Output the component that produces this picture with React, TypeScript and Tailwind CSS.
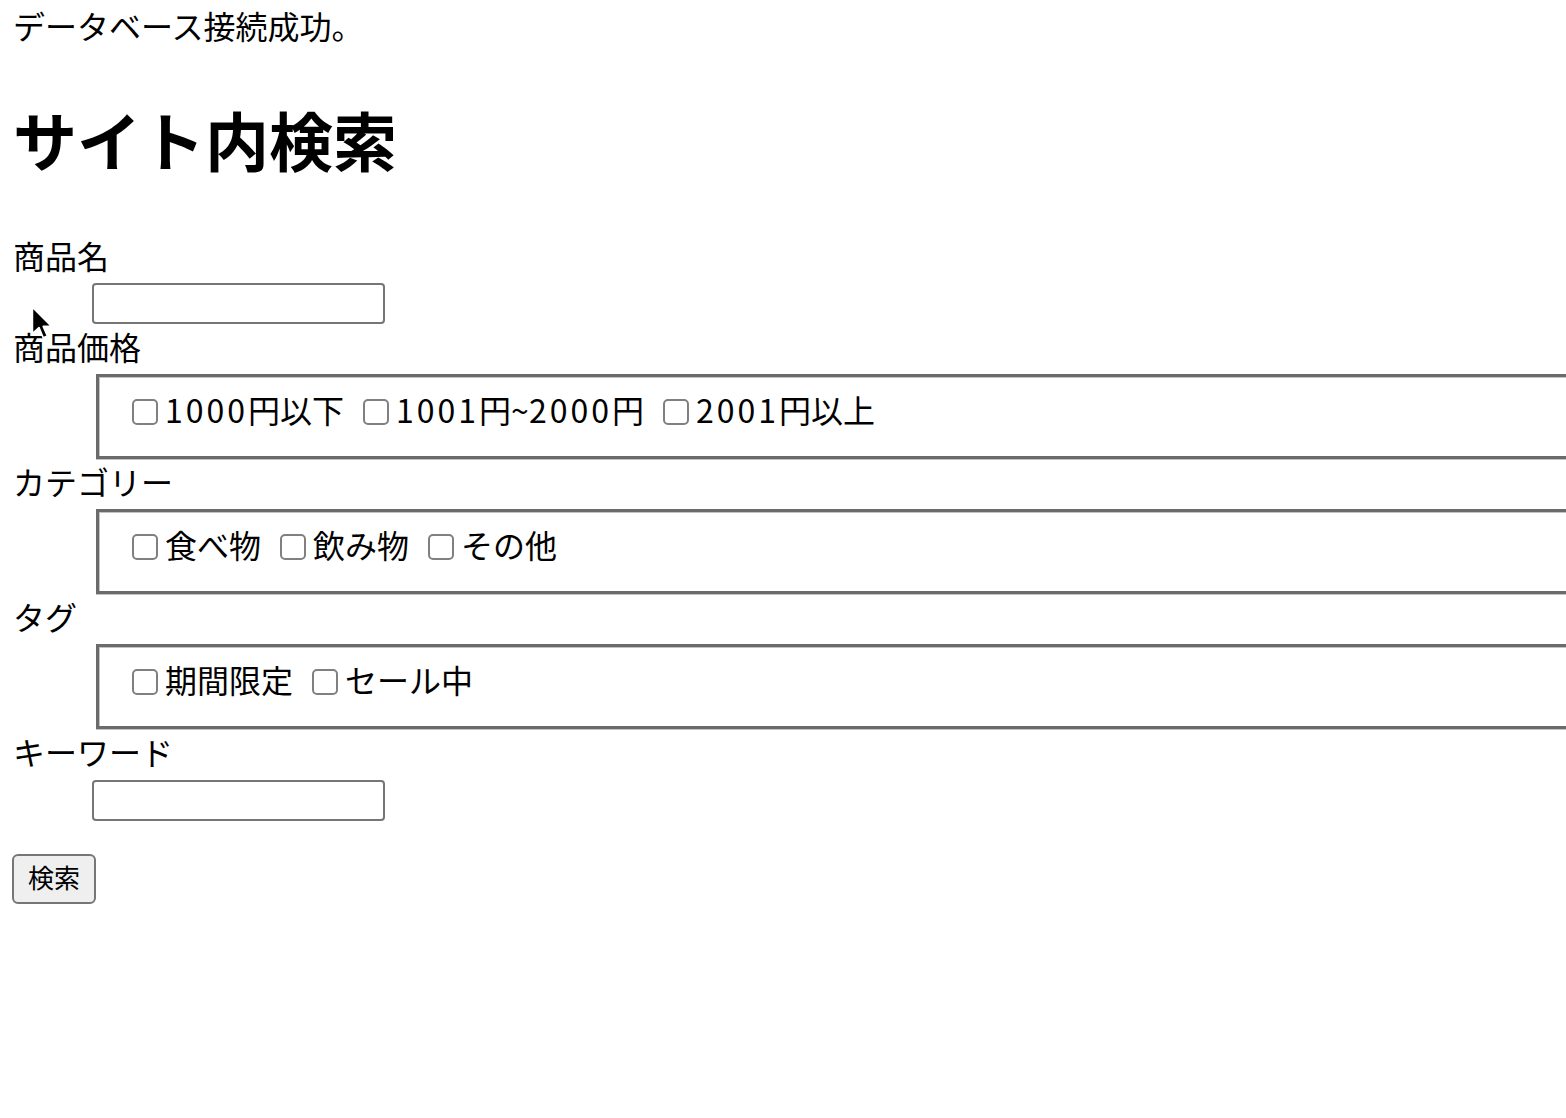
import React from 'react';

const font = { fontFamily: '"Noto Sans CJK JP", "Noto Sans", sans-serif' };

const groups: { label: string; items: string[] }[] = [
  { label: '商品価格', items: ['1000円以下', '1001円~2000円', '2001円以上'] },
  { label: 'カテゴリー', items: ['食べ物', '飲み物', 'その他'] },
  { label: 'タグ', items: ['期間限定', 'セール中'] },
];

// digits in the reference font run a little wider, so space them out
const withWideDigits = (text: string) =>
  text.split(/(\d+)/).map((part, i) =>
    /^\d+$/.test(part) ? (
      <span key={i} className="tracking-[3px]">
        {part}
      </span>
    ) : (
      <React.Fragment key={i}>{part}</React.Fragment>
    )
  );

const Label = ({ children }: { children: React.ReactNode }) => (
  <div className="h-[50px] pb-[6px] leading-[44px] pl-[1px] text-[32px] text-black">{children}</div>
);

const TextField = () => (
  <div className="ml-[80px] h-[41px]">
    <input
      type="text"
      className="box-border w-[293px] h-[41px] border-2 border-[#767676] rounded-[4px] bg-white outline-none"
    />
  </div>
);

const CheckGroup = ({ items }: { items: string[] }) => (
  <div className="ml-[84px] box-border w-[1600px] h-[85px] border-[3px] border-[#6b6b6b] shadow-[inset_1px_1px_0_#c2c2c2,0_1px_0_#c2c2c2] pl-[24px] pt-[8px]">
    <div className="flex items-center h-[48px] text-[32px] leading-[48px]">
      {items.map((item, i) => (
        <label key={item} className={`flex items-center ${i === 0 ? 'ml-[9px]' : 'ml-[19px]'}`}>
          <input
            type="checkbox"
            className="appearance-none box-border w-[26px] h-[26px] border-2 border-[#808080] rounded-[5px] bg-white m-0 mt-[6px]"
          />
          <span className="ml-[7px] text-black">{withWideDigits(item)}</span>
        </label>
      ))}
    </div>
  </div>
);

const Cursor = () => (
  <svg
    className="absolute left-[30px] top-[306px]"
    width="24"
    height="36"
    viewBox="0 0 20 30"
  >
    <path
      d="M2 1 L2 23 L7.5 18 L11 26.5 L14.5 25 L11 17 L18 17 Z"
      fill="#000"
      stroke="#fff"
      strokeWidth="1.4"
      strokeLinejoin="round"
    />
  </svg>
);

export default function App() {
  return (
    <div className="relative w-full min-h-screen overflow-hidden bg-white text-black" style={font}>
      <div className="pl-[12px]">
        <div className="h-[53px] leading-[50px] text-[32px] pl-[1px]">データベース接続成功。</div>

        <h1 className="h-[180px] pb-[10px] flex items-center text-[64px] font-bold leading-none pl-[1px]">
          サイト内検索
        </h1>

        <Label>商品名</Label>
        <TextField />

        {groups.map((g) => (
          <div key={g.label}>
            <Label>{g.label}</Label>
            <CheckGroup items={g.items} />
          </div>
        ))}

        <Label>キーワード</Label>
        <div className="mt-[1px]">
          <TextField />
        </div>

        <button className="mt-[33px] box-border w-[84px] h-[50px] pb-[4px] bg-[#efefef] border-2 border-[#767676] rounded-[6px] text-[26px] leading-none text-black">
          検索
        </button>
      </div>
      <Cursor />
    </div>
  );
}
